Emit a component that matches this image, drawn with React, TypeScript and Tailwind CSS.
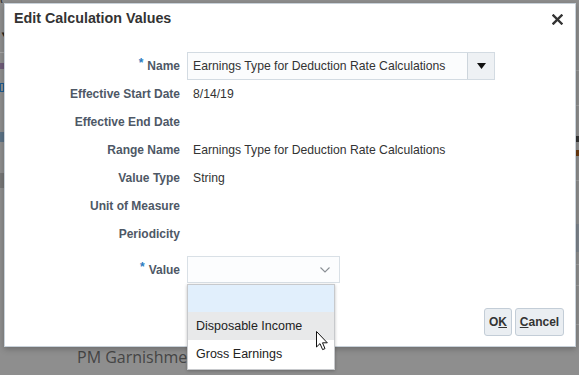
import React from "react";

const FONT = { fontFamily: '"Liberation Sans", Arial, sans-serif' };

const rows: { label: string; value?: string; required?: boolean }[] = [
  { label: "Effective Start Date", value: "8/14/19" },
  { label: "Effective End Date" },
  { label: "Range Name", value: "Earnings Type for Deduction Rate Calculations" },
  { label: "Value Type", value: "String" },
  { label: "Unit of Measure" },
  { label: "Periodicity" },
];

function Label({ text, required }: { text: string; required?: boolean }) {
  return (
    <div className="w-[175px] shrink-0 text-right text-[12px] font-bold text-[#4e5866]">
      {required && <span className="relative -top-[3px] mr-[4px] text-[#2b7cc0]">*</span>}
      {text}
    </div>
  );
}

export default function App() {
  return (
    <div className="relative h-[375px] w-[579px] overflow-hidden bg-[#8e8e8e]" style={FONT}>
      {/* page behind the modal, seen through the overlay */}
      <div className="flex h-full justify-between">
        <div className="flex w-[4px] flex-col">
          <div className="h-[3px] overflow-hidden">
            <div className="-mt-[9px] whitespace-nowrap text-[13px] text-[#3a3a3a]">Overview / Calculation Components</div>
          </div>
          <div className="mt-[29px] text-[8px] leading-[6px] text-[#222]">▼</div>
          <div className="mt-[14px] h-px bg-[#a6a6a6]" />
          <div className="mt-[10px] h-[6px] bg-[#5a3a6a]/60" />
          <div className="mt-[14px] h-[9px] border border-[#1f5c8f]" />
          <div className="mt-[40px] h-[10px] bg-[#385f80]/60" />
          <div className="mt-[31px] h-[15px] bg-[#777]" />
        </div>
        <div className="flex w-[3px] flex-col">
          <div className="mt-[70px] h-px bg-[#a0a0a0]" />
          <div className="mt-[34px] h-px bg-[#a0a0a0]" />
          <div className="mt-[30px] h-[6px] bg-[#333]" />
          <div className="mt-[8px] h-[6px] bg-[#6b3a10]" />
          <div className="mt-[24px] h-px bg-[#a0a0a0]" />
          <div className="mt-[43px] h-[28px] bg-[#7d848c]" />
          <div className="mt-[12px] h-px bg-[#a0a0a0]" />
          <div className="mt-[20px] h-px bg-[#a0a0a0]" />
          <div className="mt-[38px] h-px bg-[#a0a0a0]" />
        </div>
      </div>
      <div
        className="absolute left-[77px] top-[345px] text-[16px] text-[#454545]"
        style={{ fontFamily: '"Open Sans", sans-serif' }}
      >
        PM Garnishment
      </div>

      {/* dialog */}
      <div className="absolute left-[4px] top-[3px] flex h-[344px] w-[572px] flex-col border border-[#c9d2da] bg-white shadow-[0_2px_6px_rgba(0,0,0,0.25)]">
        <div className="flex items-center justify-between pl-[9px] pr-[12px] pt-[4px]">
          <div className="text-[14.3px] font-bold leading-[20px] text-[#333]">Edit Calculation Values</div>
          <svg width="11" height="11" viewBox="0 0 11 11" className="mt-[2px]">
            <path d="M1.5 1.5 L9.5 9.5 M9.5 1.5 L1.5 9.5" stroke="#333" strokeWidth="2.4" strokeLinecap="square" />
          </svg>
        </div>

        <div className="mt-[24px] flex flex-col">
          <div className="flex h-[28px] items-center">
            <Label text="Name" required />
            <div className="ml-[7px] flex h-[28px] w-[308px] border border-[#d3dbe2] bg-[#fbfcfd]">
              <div className="flex flex-1 items-center pl-[5px] text-[12.2px] text-[#333]">
                Earnings Type for Deduction Rate Calculations
              </div>
              <div className="flex w-[27px] items-center justify-center border-l border-[#cdd5dc] bg-[#eef1f4]">
                <svg width="9" height="6" viewBox="0 0 9 6">
                  <path d="M0 0 H9 L4.5 6 Z" fill="#111" />
                </svg>
              </div>
            </div>
          </div>

          {rows.map((r) => (
            <div key={r.label} className="flex h-[28px] items-center">
              <Label text={r.label} />
              <div className="ml-[13px] text-[12.2px] text-[#333]">{r.value}</div>
            </div>
          ))}

          <div className="mt-[8px] flex h-[27px] items-center">
            <Label text="Value" required />
            <div className="ml-[7px] flex h-[27px] w-[153px] items-center justify-end border border-[#d9e0e6] bg-[#fcfdfe] pr-[9px]">
              <svg width="10" height="6" viewBox="0 0 10 6">
                <path d="M0.5 0.5 L5 5 L9.5 0.5" fill="none" stroke="#8a8f95" strokeWidth="1.1" />
              </svg>
            </div>
          </div>
        </div>

        <div className="mt-[25px] flex justify-end gap-[3px] pr-[11px]">
          <button className="h-[28px] w-[28px] rounded-[3px] border border-[#c3cdd7] bg-[#eaeef2] text-[12px] font-bold text-[#333]">
            O<span className="underline">K</span>
          </button>
          <button className="h-[28px] w-[49px] rounded-[3px] border border-[#c3cdd7] bg-[#eaeef2] text-[12px] font-bold text-[#333]">
            <span className="underline">C</span>ancel
          </button>
        </div>
      </div>

      {/* open value list */}
      <div className="absolute left-[187px] top-[284px] flex w-[148px] flex-col border border-[#c7c9cc] bg-white text-[12.5px] text-[#222] shadow-[0_1px_3px_rgba(0,0,0,0.25)]">
        <div className="h-[27px] bg-[#e1effc]" />
        <div className="flex h-[28px] items-center bg-[#e8e9ea] pl-[8px]">Disposable Income</div>
        <div className="flex h-[29px] items-center pl-[8px]">Gross Earnings</div>
      </div>

      {/* mouse pointer */}
      <svg className="absolute left-[316px] top-[331px]" width="13" height="20" viewBox="0 0 13 20">
        <path
          d="M0.5 0.5 L0.5 16 L4 12.6 L6.6 18.6 L9 17.6 L6.5 11.8 L11.3 11.8 Z"
          fill="white"
          stroke="#111"
          strokeWidth="1"
          strokeLinejoin="round"
        />
      </svg>
    </div>
  );
}
